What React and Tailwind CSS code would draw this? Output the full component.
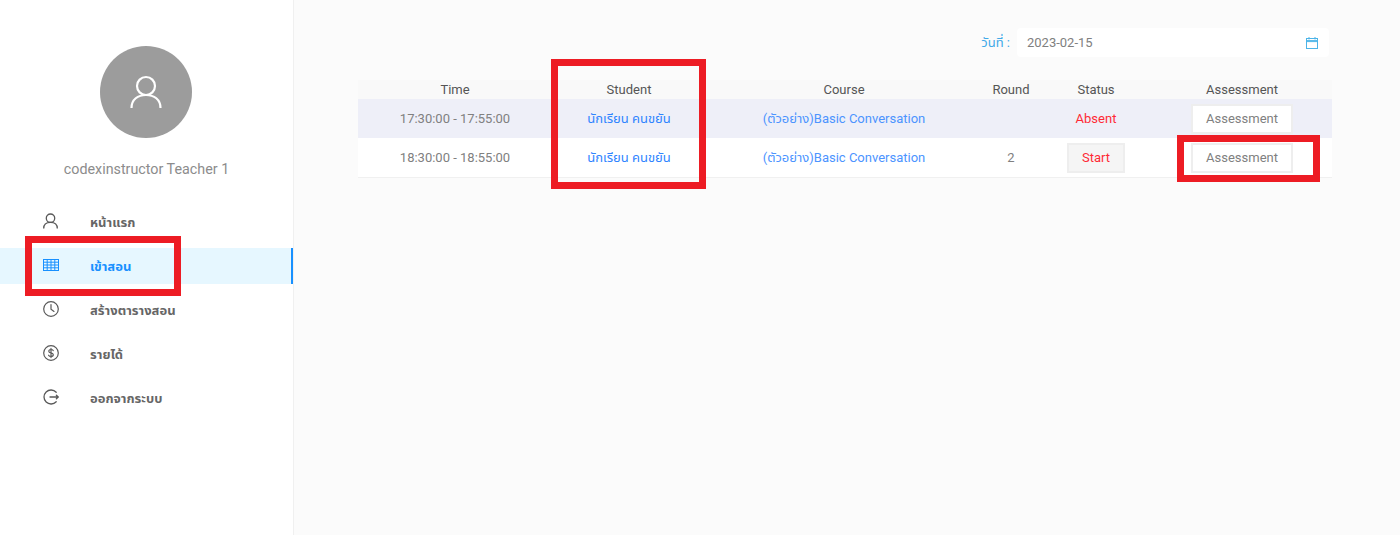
import React from "react";

function UserIcon({ className, sw = 2.2 }) {
  return (
    <svg viewBox="0 0 32 34" fill="none" stroke="currentColor" strokeWidth={sw} strokeLinecap="butt" className={className}>
      <circle cx="16" cy="11" r="9" />
      <path d="M1.5 33c0-8.6 6.4-13 14.5-13s14.5 4.4 14.5 13" />
    </svg>
  );
}
function TableIcon({ className }) {
  return (
    <svg viewBox="0 0 16 12" fill="none" stroke="currentColor" strokeWidth="1" className={className}>
      <rect x="0.5" y="0.5" width="15" height="11" />
      <path d="M0.5 3.2H15.5M0.5 6H15.5M0.5 8.8H15.5M4.2 0.5V11.5M8 0.5V11.5M11.8 0.5V11.5" />
    </svg>
  );
}
function ClockIcon({ className }) {
  return (
    <svg viewBox="0 0 16 16" fill="none" stroke="currentColor" strokeWidth="1.2" strokeLinecap="round" className={className}>
      <circle cx="8" cy="8" r="7.3" />
      <path d="M8 3.6V8.3L11 10.4" />
    </svg>
  );
}
function DollarIcon({ className }) {
  return (
    <svg viewBox="0 0 16 16" fill="none" stroke="currentColor" strokeWidth="1.2" strokeLinecap="round" className={className}>
      <circle cx="8" cy="8" r="7.3" />
      <path d="M10.2 5.6C9.8 4.8 9 4.5 8 4.5c-1.3 0-2.2.7-2.2 1.7 0 2.3 4.5 1.2 4.5 3.6 0 1-1 1.7-2.3 1.7-1.1 0-2-.4-2.4-1.3M8 3.4v9.2" />
    </svg>
  );
}
function LogoutIcon({ className }) {
  return (
    <svg viewBox="0 0 16 16" fill="none" stroke="currentColor" strokeWidth="1.3" strokeLinecap="round" strokeLinejoin="round" className={className}>
      <path d="M13.2 3.3A7 7 0 1 0 13.2 12.7" />
      <path d="M7 8H15.3M13.4 6.3L15.3 8L13.4 9.7" />
    </svg>
  );
}
function CalendarIcon({ className }) {
  return (
    <svg viewBox="0 0 12 12" fill="none" stroke="currentColor" strokeWidth="1" className={className}>
      <rect x="0.5" y="1.5" width="11" height="10" />
      <path d="M0.5 3.6H11.5M0.5 4.6H11.5M3 0V2.5M9 0V2.5" />
    </svg>
  );
}

function MenuItem({ icon, label, active }) {
  return (
    <div className={"flex h-9 items-center pl-[43px] text-[13px] font-bold " + (active ? "bg-[#e6f7ff] border-r-2 border-[#1890ff] text-[#1890ff]" : "text-[#666666]")}>
      <span className={"flex w-[47px] items-center -translate-y-px " + (active ? "" : "text-[#595959]")}>{icon}</span>
      <span className="pt-[2px]">{label}</span>
    </div>
  );
}

function Mark({ className }) {
  return <div className={"absolute border-[7px] border-[#ed1c24] " + className} />;
}

const cols = "grid grid-cols-[194px_154px_276px_58px_112px_180px] items-center text-center";

function Row({ time, round, status, shaded, last }) {
  return (
    <div className={cols + " text-[13px] " + (shaded ? "bg-[#eeeff8]" : "bg-white") + (last ? " h-[40px] border-b border-[#f0f0f0]" : " h-[39px]")}>
      <div className="text-[#808080]">{time}</div>
      <div className="text-[#2f84ff]">นักเรียน คนขยัน</div>
      <div className="text-[#4c94ff]">(ตัวอย่าง)Basic Conversation</div>
      <div className="text-[#808080]">{round}</div>
      <div className="flex justify-center">{status}</div>
      <div className="flex justify-center">
        <button className="h-[30px] w-[102px] border-2 border-[#eeeeee] bg-white text-[13px] text-[#808080]">Assessment</button>
      </div>
    </div>
  );
}

export default function App() {
  return (
    <div className="relative flex h-[535px] w-[1400px] overflow-hidden bg-[#fbfbfb] font-['Roboto','Noto_Sans','Noto_Sans_Thai',sans-serif]">
      <aside className="flex h-full w-[294px] shrink-0 flex-col border-r border-[#f0f0f0] bg-white pt-[46px]">
        <div className="ml-[100px] flex h-[92px] w-[92px] items-center justify-center rounded-full bg-[#9c9c9c] text-white">
          <UserIcon className="h-[34px] w-[32px]" />
        </div>
        <div className="mt-[20px] text-center text-[14.3px] leading-[22px] text-[#8c8c8c]">codexinstructor Teacher 1</div>
        <nav className="mt-[24px] flex flex-col gap-2">
          <MenuItem label="หน้าแรก" icon={<UserIcon className="h-[16px] w-[15px]" sw={2.8} />} />
          <MenuItem active label="เข้าสอน" icon={<TableIcon className="h-[12px] w-[16px]" />} />
          <MenuItem label="สร้างตารางสอน" icon={<ClockIcon className="h-[16px] w-[16px]" />} />
          <MenuItem label="รายได้" icon={<DollarIcon className="h-[16px] w-[16px]" />} />
          <MenuItem label="ออกจากระบบ" icon={<LogoutIcon className="h-[16px] w-[16px]" />} />
        </nav>
      </aside>

      <main className="min-w-0 flex-1 pl-[64px] pt-[28px]">
        <div className="flex h-[29px] w-[971px] items-center justify-end">
          <span className="mr-[7px] text-[13px] text-[#40a9e8]">วันที่ :</span>
          <div className="flex h-[29px] w-[312px] items-center justify-between rounded bg-white pl-[10px] pr-[11px] text-[13px] text-[#808080]">
            <span>2023-02-15</span>
            <CalendarIcon className="h-[12px] w-[12px] text-[#4db4e8]" />
          </div>
        </div>
        <div className="mt-[23px] w-[974px]">
          <div className={cols + " h-[19px] bg-[#f9f9f9] pb-[3px] text-[13px] text-[#555555]"}>
            <div>Time</div>
            <div>Student</div>
            <div>Course</div>
            <div>Round</div>
            <div>Status</div>
            <div>Assessment</div>
          </div>
          <Row shaded time="17:30:00 - 17:55:00" status={<span className="text-[#ff2a35]">Absent</span>} />
          <Row last time="18:30:00 - 18:55:00" round="2" status={
            <button className="h-[30px] w-[58px] border-2 border-[#eeeeee] bg-[#f5f5f5] text-[13px] text-[#ff2a35]">Start</button>
          } />
        </div>
      </main>

      <Mark className="left-[25px] top-[236px] h-[60px] w-[156px]" />
      <Mark className="left-[551px] top-[59px] h-[130px] w-[155px]" />
      <Mark className="left-[1177px] top-[135px] h-[47px] w-[143px]" />
    </div>
  );
}
